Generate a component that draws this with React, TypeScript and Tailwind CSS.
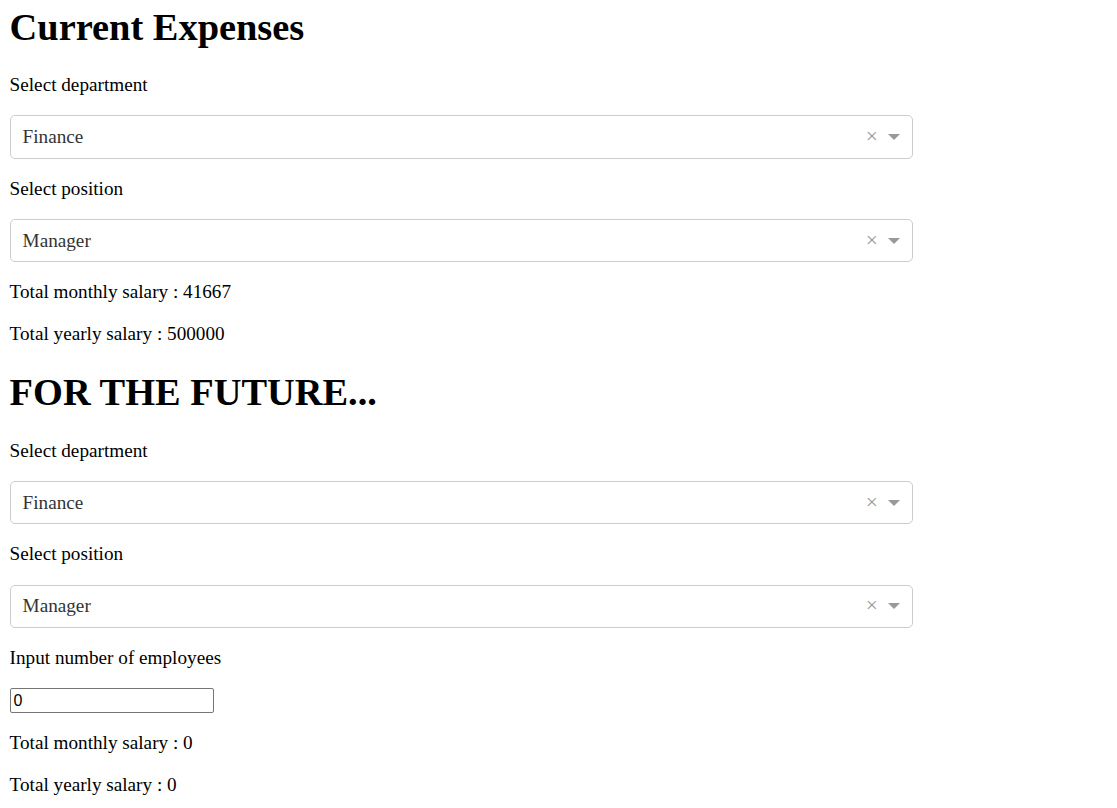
import { useState } from "react";

type DropdownProps = { value: string; onClear: () => void };

function Dropdown({ value, onClear }: DropdownProps) {
  return (
    <div className="flex h-[43.2px] w-[903.5px] items-center rounded-[5px] border border-[#ccc] bg-white">
      <div className="flex-1 truncate pl-[12px] text-[#333]">{value}</div>
      <button
        onClick={onClear}
        className="flex w-[20.4px] items-center justify-center text-[21.6px] leading-none text-[#999]"
      >
        ×
      </button>
      <div className="flex w-[30px] items-center justify-center pr-[6px]">
        <span className="h-0 w-0 border-x-[6px] border-t-[6px] border-x-transparent border-t-[#999]" />
      </div>
    </div>
  );
}

export default function App() {
  const [dept, setDept] = useState("Finance");
  const [pos, setPos] = useState("Manager");
  const [futureDept, setFutureDept] = useState("Finance");
  const [futurePos, setFuturePos] = useState("Manager");
  const [employees, setEmployees] = useState("0");

  const yearly = 500000;
  const monthly = Math.round(yearly / 12);
  const futureYearly = yearly * (parseInt(employees) || 0);
  const futureMonthly = Math.round(futureYearly / 12);

  return (
    <div className="min-h-screen bg-white px-[9.6px] pt-[4.5px] pb-[9.6px] font-['Liberation_Serif',serif] text-[19.2px] leading-[normal] text-black">
      <h1 className="mb-[25.7px] text-[38.4px] font-bold">Current Expenses</h1>
      <p className="my-[19.2px]">Select department</p>
      <Dropdown value={dept} onClear={() => setDept("")} />
      <p className="my-[19.2px]">Select position</p>
      <Dropdown value={pos} onClear={() => setPos("")} />
      <p className="my-[19.2px]">Total monthly salary : {monthly}</p>
      <p className="my-[19.2px]">Total yearly salary : {yearly}</p>

      <h1 className="my-[25.7px] text-[38.4px] font-bold">FOR THE FUTURE...</h1>
      <p className="my-[19.2px]">Select department</p>
      <Dropdown value={futureDept} onClear={() => setFutureDept("")} />
      <p className="my-[19.2px]">Select position</p>
      <Dropdown value={futurePos} onClear={() => setFuturePos("")} />
      <p className="my-[19.2px]">Input number of employees</p>
      <input
        type="number"
        value={employees}
        onChange={(e) => setEmployees(e.target.value)}
        className="block h-[25px] w-[204px] rounded-[2px] border border-[#767676] px-[3px] font-['Liberation_Sans',sans-serif] text-[16px] text-black outline-none [appearance:textfield]"
      />
      <p className="my-[19.2px]">Total monthly salary : {futureMonthly}</p>
      <p className="my-[19.2px]">Total yearly salary : {futureYearly}</p>
    </div>
  );
}
